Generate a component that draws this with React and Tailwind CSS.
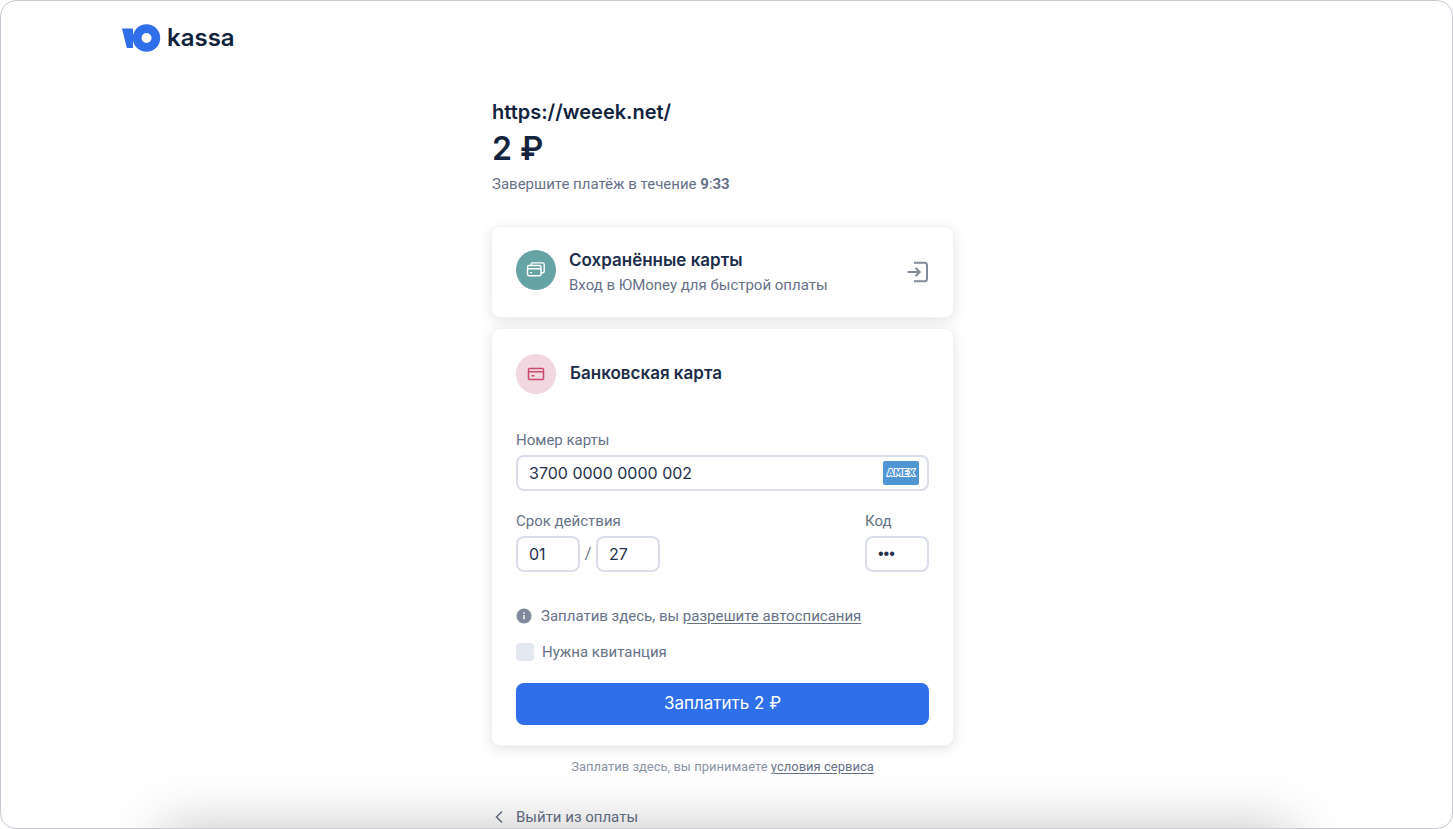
import { useState } from 'react'
import clsx from 'clsx'

const inputClass =
  "h-9 w-full rounded-lg border-2 border-[#dadeeb] bg-white px-[11px] font-['Inter',sans-serif] text-base text-[#1f314c] outline-none focus:border-[#2f6fea]"

function Logo() {
  return (
    <a href="#" className="flex items-center gap-[6px]">
      <svg width="39" height="28" viewBox="0 0 39 28" aria-hidden="true">
        <path d="M0 4.500H11V24H4.800Z" fill="#2f6fea" />
        <circle cx="24.500" cy="14" r="13.700" fill="#2f6fea" />
        <circle cx="24.500" cy="14" r="5" fill="#fff" />
      </svg>
      <span className="font-['Inter',sans-serif] text-2xl leading-6 font-semibold text-[#12233d]">kassa</span>
    </a>
  )
}

function SavedCardsIcon() {
  return (
    <svg width="20" height="18" viewBox="0 0 20 18" fill="none" stroke="#fff" strokeWidth="1.400" strokeLinejoin="round" aria-hidden="true">
      <path d="M5 4.500V3.400a1.500 1.500 0 0 1 1.500-1.500h10.200a1.500 1.500 0 0 1 1.500 1.500v6.900a1.500 1.500 0 0 1-1.500 1.500H15" />
      <rect x="1.500" y="4.500" width="13.500" height="10.200" rx="1.500" />
      <path d="M1.500 7.800H15M4 11.600h2.200" />
    </svg>
  )
}

function BankCardIcon() {
  return (
    <svg width="18" height="14" viewBox="0 0 18 14" fill="none" stroke="#cb4a70" strokeWidth="1.500" aria-hidden="true">
      <rect x="1.500" y="1.500" width="15" height="11" rx="1" />
      <path d="M1.500 4.800h15M4.500 8.700h3" />
    </svg>
  )
}

function LoginIcon() {
  return (
    <svg width="22" height="22" viewBox="0 0 22 22" fill="none" stroke="#838b9b" strokeWidth="2" aria-hidden="true">
      <path d="M7 1.700h10.500a2.500 2.500 0 0 1 2.500 2.500v13.600a2.500 2.500 0 0 1-2.500 2.500H7" />
      <path d="M.5 11H12.500M8.500 6.800l4.200 4.200-4.200 4.200" />
    </svg>
  )
}

function AmexBadge() {
  return (
    <svg width="36" height="24" viewBox="0 0 36 24" role="img" aria-label="American Express" className="pointer-events-none absolute top-[6px] right-[10px]">
      <rect width="36" height="24" rx="2" fill="#5096d5" />
      <text
        x="18"
        y="15"
        textAnchor="middle"
        fontFamily="DejaVu Sans, sans-serif"
        fontSize="8.500"
        fontWeight="700"
        fill="#5096d5"
        stroke="#fff"
        strokeWidth="2"
        paintOrder="stroke"
      >
        AMEX
      </text>
    </svg>
  )
}

function Field({ id, label, className, children }) {
  return (
    <div className={clsx('flex flex-col gap-1', className)}>
      <label htmlFor={id} className="text-[15px] leading-[22px]">{label}</label>
      {children}
    </div>
  )
}

export default function App() {
  const [card, setCard] = useState('3700 0000 0000 002')
  const [month, setMonth] = useState('01')
  const [year, setYear] = useState('27')
  const [code, setCode] = useState('123')
  const [receipt, setReceipt] = useState(false)

  const panel = 'rounded-lg bg-white px-6 shadow-[0_0_0_1px_#f1f2f4,0_3px_14px_rgba(25,35,60,0.14)]'

  return (
    <div className="relative min-h-screen overflow-hidden rounded-2xl border border-[#c9c8d3] bg-white font-['Roboto',sans-serif] text-[#667287]">
      <header className="px-[121px] pt-[23px]">
        <Logo />
      </header>

      <main className="mt-[46px] pr-2">
        <div className="mx-auto max-w-[461px]">
          <h1 className="font-['Inter',sans-serif] text-xl leading-7 font-semibold text-[#12233d]">https://weeek.net/</h1>
          <p className="font-['Inter',sans-serif] text-[32px] leading-[46px] font-semibold text-[#12233d]">2 ₽</p>
          <p className="text-[15px] leading-6">
            Завершите платёж в течение <b>9</b>:<b>33</b>
          </p>

          <button type="button" className={clsx(panel, 'mt-[31px] flex w-full items-center gap-[13px] py-5 text-left')}>
            <span className="mt-[3px] flex size-10 shrink-0 items-center justify-center self-start rounded-full bg-[#66a3a5]">
              <SavedCardsIcon />
            </span>
            <span className="flex-1">
              <span className="block font-['Inter',sans-serif] text-[17px] leading-[26px] font-semibold text-[#1b2d49]">Сохранённые карты</span>
              <span className="block text-[15px] leading-6">Вход в ЮMoney для быстрой оплаты</span>
            </span>
            <LoginIcon />
          </button>

          <form className={clsx(panel, 'mt-3 pt-[25px] pb-5')} onSubmit={e => e.preventDefault()}>
            <div className="flex items-center gap-[14px]">
              <span className="flex size-10 items-center justify-center rounded-full bg-[#f1d7df]">
                <BankCardIcon />
              </span>
              <h2 className="font-['Inter',sans-serif] text-[17px] font-semibold text-[#1b2d49]">Банковская карта</h2>
            </div>

            <Field id="card" label="Номер карты" className="mt-[35px]">
              <div className="relative">
                <input id="card" className={inputClass} value={card} onChange={e => setCard(e.target.value)} />
                <AmexBadge />
              </div>
            </Field>

            <div className="mt-[19px] flex justify-between">
              <Field id="month" label="Срок действия">
                <div className="flex items-center gap-1">
                  <div className="w-16">
                    <input id="month" className={inputClass} value={month} onChange={e => setMonth(e.target.value)} />
                  </div>
                  <span className="w-2 text-center">/</span>
                  <div className="w-16">
                    <input aria-label="Год" className={inputClass} value={year} onChange={e => setYear(e.target.value)} />
                  </div>
                </div>
              </Field>
              <Field id="code" label="Код" className="w-16">
                <input
                  id="code"
                  type="password"
                  className="h-9 w-full rounded-lg border-2 border-[#dadeeb] bg-white px-[11px] font-['Liberation_Sans',sans-serif] text-base text-[#1f314c] outline-none focus:border-[#2f6fea]"
                  value={code}
                  onChange={e => setCode(e.target.value)}
                />
              </Field>
            </div>

            <p className="mt-[33px] flex items-center gap-[9px] text-[15px] leading-[22px]">
              <svg width="16" height="16" viewBox="0 0 16 16" aria-hidden="true">
                <circle cx="8" cy="8" r="7.500" fill="#7f899a" />
                <path d="M8 7v4.500M8 4.300v1.400" stroke="#fff" strokeWidth="1.400" />
              </svg>
              <span>
                Заплатив здесь, вы <a href="#" className="underline underline-offset-2">разрешите автосписания</a>
              </span>
            </p>

            <label className="mt-[14px] flex items-center gap-2 text-[15px] leading-[22px]">
              <input
                type="checkbox"
                checked={receipt}
                onChange={e => setReceipt(e.target.checked)}
                className="size-[18px] appearance-none rounded bg-[#e3e8f1] checked:bg-[#2f6fea]"
              />
              Нужна квитанция
            </label>

            <button type="submit" className="mt-5 h-[42px] w-full rounded-lg bg-[#2f6fea] font-['Inter',sans-serif] text-[17px] text-white">
              Заплатить 2 ₽
            </button>
          </form>

          <p className="mt-3 text-center text-[13px] leading-5 text-[#8a94a5]">
            Заплатив здесь, вы принимаете <a href="#" className="text-[#667287] underline underline-offset-2">условия сервиса</a>
          </p>

          <a href="#" className="mt-[30px] flex items-center gap-3 text-[15px] leading-5">
            <svg width="12" height="14" viewBox="0 0 12 14" fill="none" stroke="#667287" strokeWidth="1.500" aria-hidden="true">
              <path d="M10 1.500L4.500 7L10 12.500" />
            </svg>
            Выйти из оплаты
          </a>
        </div>
      </main>

      <div className="pointer-events-none absolute inset-x-[11%] top-full h-40 shadow-[0_0_56px_rgba(0,0,0,0.24)]" />
    </div>
  )
}
